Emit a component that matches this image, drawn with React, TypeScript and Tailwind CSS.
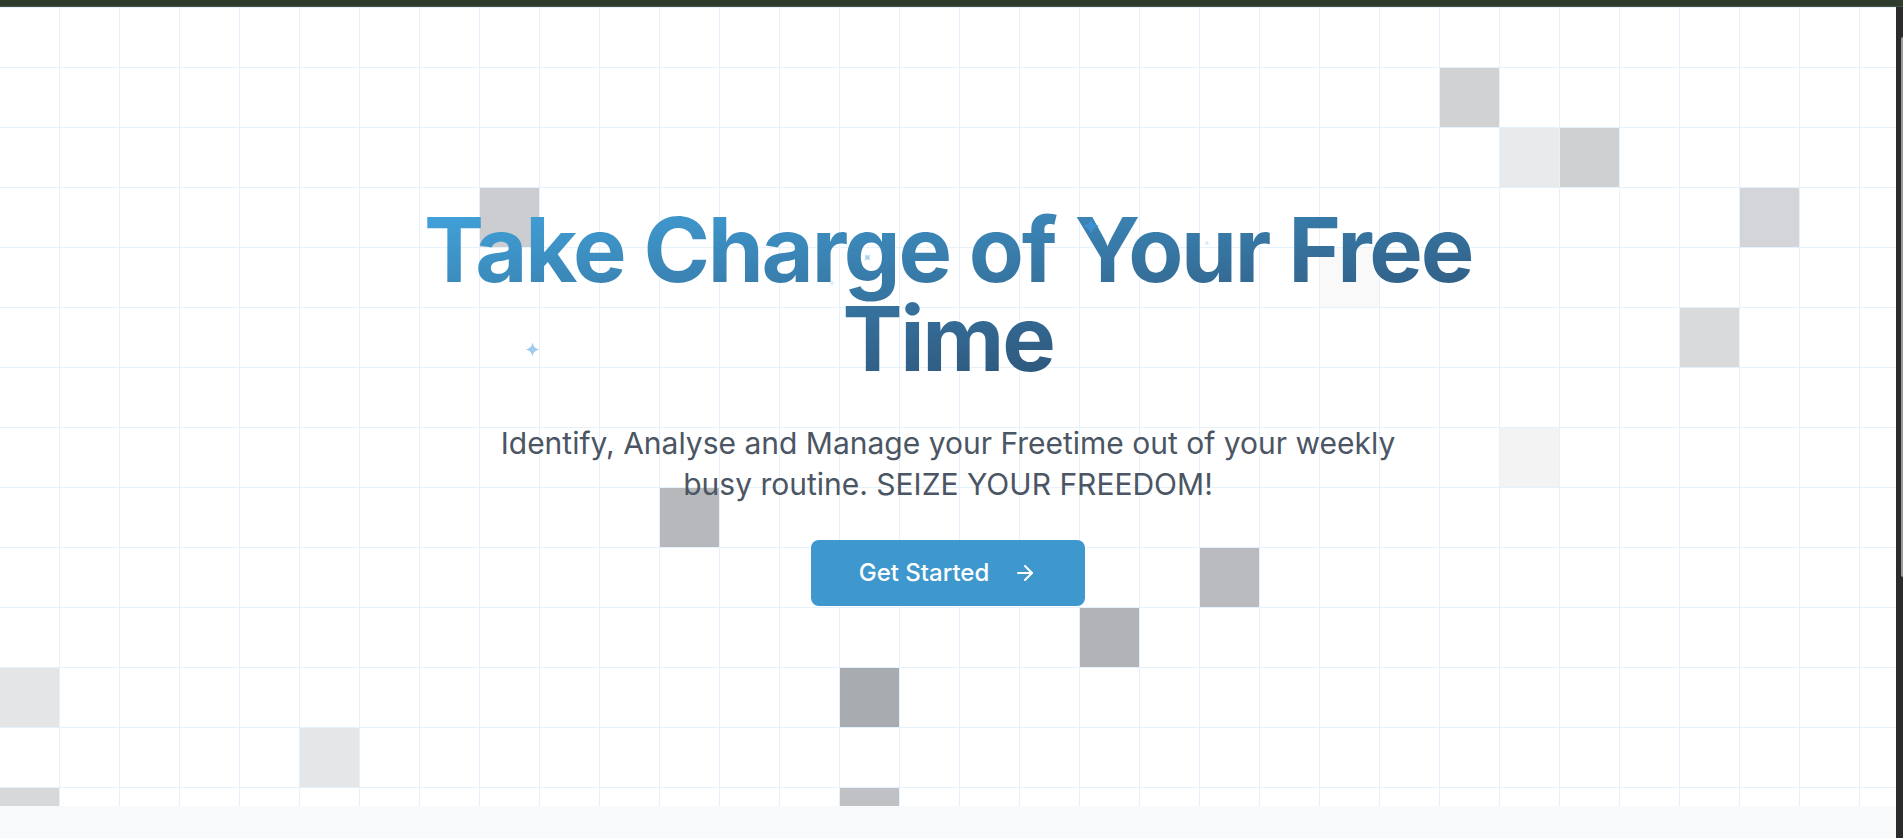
import { ArrowRight } from 'lucide-react'

// filled cells of the background grid: [column, row, fill]
const squares: [number, number, string][] = [
  [24, 1, '#d1d2d4'],
  [25, 2, '#e9eaeb'],
  [26, 2, '#cfd0d2'],
  [29, 3, '#d4d5d8'],
  [8, 3, '#cccdd0'],
  [22, 4, '#f9f9fa'],
  [28, 5, '#d9dadb'],
  [25, 7, '#f3f3f4'],
  [11, 8, '#b7b8bb'],
  [20, 9, '#babbbe'],
  [18, 10, '#b2b3b7'],
  [14, 11, '#a8abaf'],
  [0, 11, '#e4e5e6'],
  [5, 12, '#e5e6e7'],
  [0, 13, '#d7d8da'],
  [14, 13, '#c0c1c4']
]

const CELL = 60

function GridPattern() {
  return (
    <svg
      aria-hidden="true"
      className="pointer-events-none absolute inset-0 h-full w-full"
    >
      <defs>
        <pattern
          id="hero-grid"
          width={CELL}
          height={CELL}
          patternUnits="userSpaceOnUse"
          x={-1}
          y={0}
        >
          <path
            d={`M0 ${CELL}V0H${CELL}`}
            fill="none"
            stroke="#e5f2fb"
            strokeWidth={2}
          />
        </pattern>
      </defs>
      <rect width="100%" height="100%" fill="url(#hero-grid)" />
      {squares.map(([col, row, fill]) => (
        <rect
          key={`${col}-${row}`}
          x={col * CELL}
          y={row * CELL + 1}
          width={CELL - 1}
          height={CELL - 1}
          fill={fill}
        />
      ))}
    </svg>
  )
}

function Sparkle({
  className,
  color
}: {
  className: string
  color: string
}) {
  return (
    <svg viewBox="0 0 24 24" className={className} aria-hidden="true">
      <path
        d="M12 0C12.6 6.8 17.2 11.4 24 12C17.2 12.6 12.6 17.2 12 24C11.4 17.2 6.8 12.6 0 12C6.8 11.4 11.4 6.8 12 0Z"
        fill={color}
      />
    </svg>
  )
}

export default function App() {
  return (
    <div
      className="flex h-[838px] flex-col overflow-hidden bg-white"
      style={{ fontFamily: 'Inter, "Liberation Sans", sans-serif' }}
    >
      <div className="h-[7px] shrink-0 border-b border-[#465242] bg-[#2f3b2c]" />

      <div className="flex flex-1">
        <main className="flex flex-1 flex-col">
          {/* hero */}
          <section className="relative h-[799px] shrink-0 overflow-hidden bg-white">
            <GridPattern />

            <div className="relative flex h-full flex-col items-center justify-center px-6 pb-[2px] text-center">
              <div className="relative w-full max-w-[1229px]">
                <h1 className="bg-gradient-to-br from-[#42a9e3] to-[#274160] bg-clip-text text-[90px] leading-[89px] font-bold tracking-tight text-transparent">
                  Take Charge of Your Free Time
                </h1>
                <Sparkle
                  className="absolute left-[191px] top-[137px] h-[15px] w-[15px]"
                  color="#9fcdec"
                />
                <Sparkle
                  className="absolute left-[529px] top-[48px] h-[9px] w-[9px] rotate-45"
                  color="#a9d2ee"
                />
                <Sparkle
                  className="absolute left-[494px] top-[74px] h-[8px] w-[8px]"
                  color="#e3f0fa"
                />
                <Sparkle
                  className="absolute left-[748px] top-[12px] h-[18px] w-[18px]"
                  color="#3d8fd0"
                />
                <Sparkle
                  className="absolute left-[870px] top-[35px] h-[6px] w-[6px]"
                  color="#d5e7f5"
                />
              </div>

              <p className="mt-10 max-w-[960px] text-[30px] leading-[40.8px] text-[#4b5563]">
                Identify, Analyse and Manage your Freetime out of your weekly
                busy routine. SEIZE YOUR FREEDOM!
              </p>

              <button className="mt-9 flex h-[66px] items-center gap-6 rounded-lg bg-[#3e97cd] px-12 text-2xl font-medium text-white">
                Get Started
                <ArrowRight size={24} strokeWidth={2} />
              </button>
            </div>
          </section>

          {/* start of the next section */}
          <section className="flex-1 bg-[#f8f9fa]" />
        </main>

        {/* scrollbar track */}
        <div className="relative w-[7px] shrink-0 bg-[#2b2b2b]">
          <div className="absolute right-0 top-[30px] h-[540px] w-[2px] rounded-l-full bg-[#9a9a9a]" />
        </div>
      </div>
    </div>
  )
}
